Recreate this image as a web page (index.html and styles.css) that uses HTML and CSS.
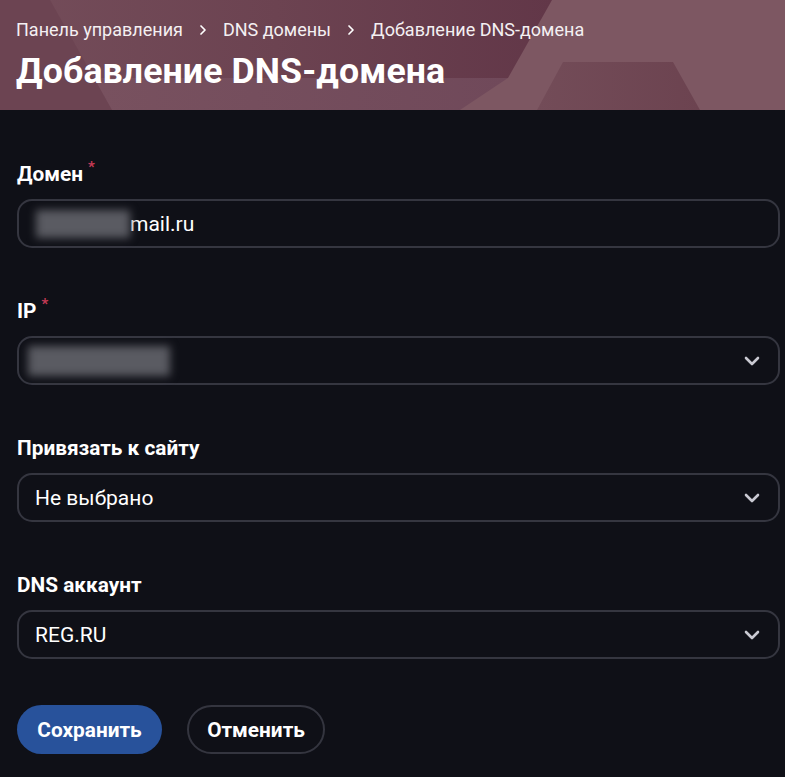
FILE: index.html
```html
<!DOCTYPE html>
<html lang="ru">
<head>
<meta charset="utf-8">
<title>Добавление DNS-домена</title>
<link rel="stylesheet" href="styles.css">
</head>
<body>
<header class="hero">
  <svg class="hero-bg" viewBox="0 0 785 110" preserveAspectRatio="none" aria-hidden="true">
    <defs>
      <linearGradient id="g1" x1="0" y1="0" x2="1" y2="0">
        <stop offset="0" stop-color="#744d5a"/>
        <stop offset="0.5" stop-color="#6c4351"/>
        <stop offset="1" stop-color="#623748"/>
      </linearGradient>
      <linearGradient id="g2" x1="0" y1="0" x2="1" y2="0">
        <stop offset="0" stop-color="#7a5360"/>
        <stop offset="1" stop-color="#70495a"/>
      </linearGradient>
      <linearGradient id="g3" x1="0" y1="0" x2="1" y2="0">
        <stop offset="0" stop-color="#734c58"/>
        <stop offset="1" stop-color="#6c4350"/>
      </linearGradient>
    </defs>
    <rect x="0" y="0" width="785" height="110" fill="#7d5762"/>
    <polygon points="0,0 552,0 508,78 0,78" fill="url(#g1)"/>
    <polygon points="0,78 508,78 460,110 0,110" fill="url(#g2)"/>
    <polygon points="0,0 50,0 112,110 0,110" fill="#6c4452"/>
    <polygon points="563,62 673,62 700,110 537,110" fill="url(#g3)"/>
  </svg>
  <nav class="crumbs">
    <span>Панель управления</span>
    <svg class="sep" viewBox="0 0 8 12"><path d="M2 2l4 4-4 4" fill="none" stroke="#fff" stroke-width="1.7" stroke-linecap="round" stroke-linejoin="round"/></svg>
    <span>DNS домены</span>
    <svg class="sep" viewBox="0 0 8 12"><path d="M2 2l4 4-4 4" fill="none" stroke="#fff" stroke-width="1.7" stroke-linecap="round" stroke-linejoin="round"/></svg>
    <span>Добавление DNS-домена</span>
  </nav>
  <h1 class="title">Добавление DNS-домена</h1>
</header>

<main class="form">
  <div class="field">
    <div class="label">Домен<span class="req">*</span></div>
    <div class="control"><span class="blur blur-domain"></span><span class="value">mail.ru</span></div>
  </div>
  <div class="field">
    <div class="label">IP<span class="req">*</span></div>
    <div class="control select"><span class="blur blur-ip"></span>
      <svg class="chev" viewBox="0 0 16 10"><path d="M2 2l6 6 6-6" fill="none" stroke="#c9c9d2" stroke-width="2.6" stroke-linecap="round" stroke-linejoin="round"/></svg>
    </div>
  </div>
  <div class="field">
    <div class="label">Привязать к сайту</div>
    <div class="control select"><span class="value">Не выбрано</span>
      <svg class="chev" viewBox="0 0 16 10"><path d="M2 2l6 6 6-6" fill="none" stroke="#c9c9d2" stroke-width="2.6" stroke-linecap="round" stroke-linejoin="round"/></svg>
    </div>
  </div>
  <div class="field">
    <div class="label">DNS аккаунт</div>
    <div class="control select"><span class="value">REG.RU</span>
      <svg class="chev" viewBox="0 0 16 10"><path d="M2 2l6 6 6-6" fill="none" stroke="#c9c9d2" stroke-width="2.6" stroke-linecap="round" stroke-linejoin="round"/></svg>
    </div>
  </div>
  <div class="actions">
    <button class="btn btn-primary">Сохранить</button>
    <button class="btn btn-outline">Отменить</button>
  </div>
</main>
</body>
</html>
```

FILE: styles.css
```css
* { box-sizing: border-box; }
html, body {
  margin: 0;
  background: #0f1017;
  font-family: Roboto, "Noto Sans", sans-serif;
  color: #fff;
}
.hero {
  position: relative;
  height: 110px;
  padding: 17px 16px 0;
  overflow: hidden;
}
.hero-bg {
  position: absolute;
  inset: 0;
  width: 100%;
  height: 100%;
  z-index: 0;
}
.crumbs, .title { position: relative; z-index: 1; }
.crumbs {
  display: flex;
  align-items: center;
  gap: 16px;
  font-size: 18px;
  line-height: 26px;
  color: #f4f0f2;
}
.sep { width: 8px; height: 12px; }
.title {
  margin: 7px 0 0;
  font-size: 35.7px;
  font-weight: 700;
  line-height: 42px;
  letter-spacing: 0.1px;
}
.form {
  padding: 51px 5px 24px 17px;
  display: flex;
  flex-direction: column;
}
.field {
  display: flex;
  flex-direction: column;
  gap: 12px;
  margin-bottom: 50px;
}
.label {
  font-size: 20.8px;
  font-weight: 700;
  line-height: 26px;
  height: 26px;
  color: #fff;
}
.req {
  color: #c43a55;
  font-size: 15px;
  line-height: 0;
  margin-left: 5px;
  position: relative;
  top: -9px;
}
.control {
  height: 49px;
  border: 2px solid #353640;
  border-radius: 15px;
  display: flex;
  align-items: center;
  padding: 0 16px;
  font-size: 21px;
  position: relative;
}
.select { padding-right: 18px; }
.value { color: #fff; }
.chev { width: 16px; height: 10px; margin-left: auto; }
.blur {
  display: block;
  background: #5a5b62;
  filter: blur(4px);
  height: 28px;
}
.blur-domain { width: 94px; margin-left: 1px; }
.blur-ip { width: 142px; margin-left: -7px; height: 30px; }
.actions {
  display: flex;
  gap: 25px;
  margin-top: -4px;
}
.btn {
  height: 49px;
  border-radius: 25px;
  font-family: Roboto, "Noto Sans", sans-serif;
  font-size: 20.8px;
  font-weight: 700;
  color: #fff;
  padding: 0;
  cursor: pointer;
}
.btn-primary {
  background: #28529b;
  border: none;
  width: 145px;
}
.btn-outline {
  background: transparent;
  border: 2px solid #34353f;
  width: 138px;
}
```
